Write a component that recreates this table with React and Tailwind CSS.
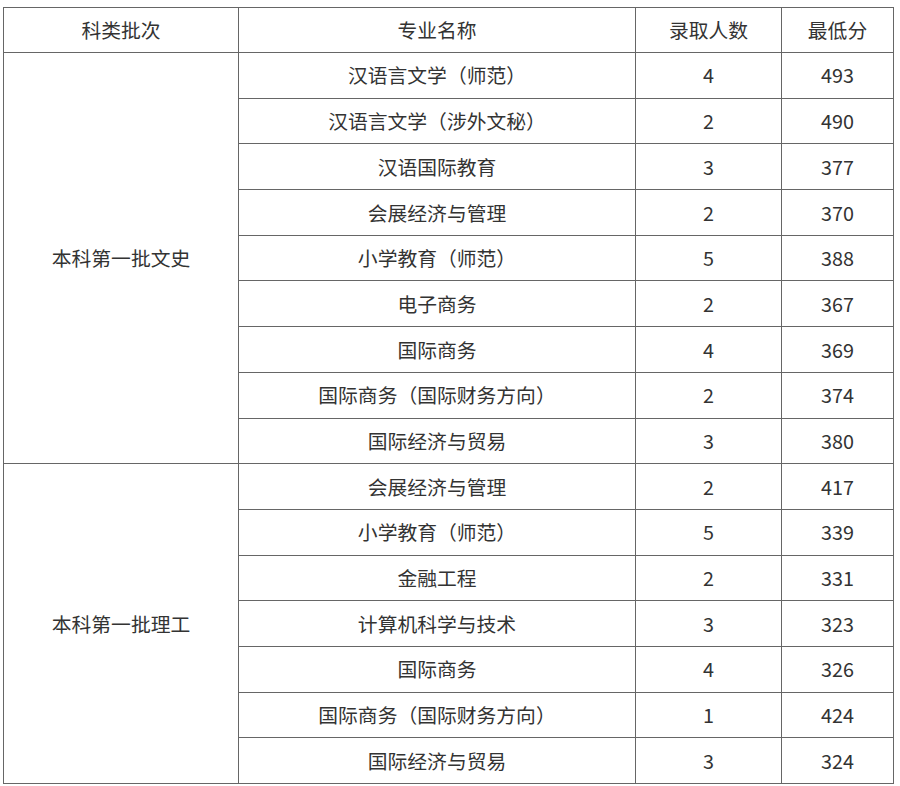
const groups = [
  {
    name: "本科第一批文史",
    rows: [
      ["汉语言文学（师范）", 4, 493],
      ["汉语言文学（涉外文秘）", 2, 490],
      ["汉语国际教育", 3, 377],
      ["会展经济与管理", 2, 370],
      ["小学教育（师范）", 5, 388],
      ["电子商务", 2, 367],
      ["国际商务", 4, 369],
      ["国际商务（国际财务方向）", 2, 374],
      ["国际经济与贸易", 3, 380],
    ],
  },
  {
    name: "本科第一批理工",
    rows: [
      ["会展经济与管理", 2, 417],
      ["小学教育（师范）", 5, 339],
      ["金融工程", 2, 331],
      ["计算机科学与技术", 3, 323],
      ["国际商务", 4, 326],
      ["国际商务（国际财务方向）", 1, 424],
      ["国际经济与贸易", 3, 324],
    ],
  },
];

const cell = "border border-[#666666] text-center align-middle p-0";

export default function App() {
  return (
    <div
      className="w-[900px] h-[786px] bg-white pt-[7px] pl-[3px] text-[#333333] text-[19.8px] leading-none"
      style={{ fontFamily: '"Microsoft YaHei", "Noto Sans CJK SC", "Noto Sans", sans-serif' }}
    >
      <table className="border-collapse table-fixed w-[890px]">
        <colgroup>
          <col className="w-[235px]" />
          <col className="w-[397px]" />
          <col className="w-[146px]" />
          <col className="w-[112px]" />
        </colgroup>
        <thead>
          <tr className="h-[45px]">
            <th className={`${cell} font-normal`}>科类批次</th>
            <th className={`${cell} font-normal`}>专业名称</th>
            <th className={`${cell} font-normal`}>录取人数</th>
            <th className={`${cell} font-normal`}>最低分</th>
          </tr>
        </thead>
        <tbody>
          {groups.map((g) =>
            g.rows.map((r, i) => (
              <tr key={g.name + i} className="h-[45.7px]">
                {i === 0 && (
                  <td rowSpan={g.rows.length} className={cell}>
                    {g.name}
                  </td>
                )}
                <td className={cell}>{r[0]}</td>
                <td className={cell}>{r[1]}</td>
                <td className={cell}>{r[2]}</td>
              </tr>
            ))
          )}
        </tbody>
      </table>
    </div>
  );
}
